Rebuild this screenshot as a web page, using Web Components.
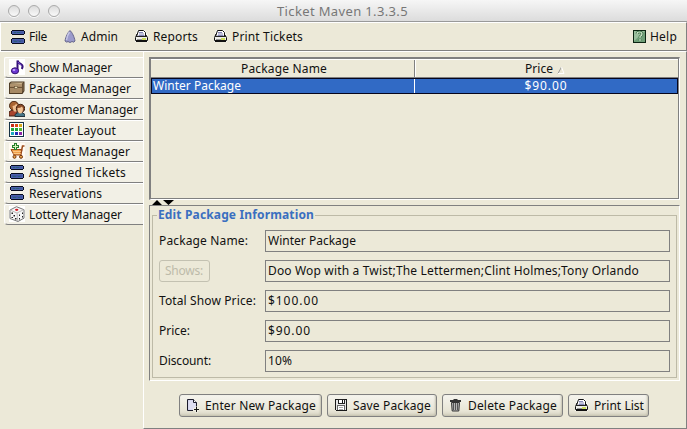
<!DOCTYPE html>
<html lang="en"><head><meta charset="utf-8"><title>Ticket Maven 1.3.3.5</title>
<style>
html,body{margin:0;height:100%;overflow:hidden;background:#ece9d8}
body{font:12px/16px "Noto Sans","Open Sans",sans-serif;color:#111}
</style></head><body>
<ticket-app></ticket-app>
<script>
const define=(name,css,html,after)=>customElements.define(name,class extends HTMLElement{
  connectedCallback(){
    if(!this.shadowRoot){
      const root=this.attachShadow({mode:'open'});
      root.innerHTML='<style>*{box-sizing:border-box}'+css+'</style>'+(typeof html==='function'?html(this):html);
    }
    if(after)after(this);
  }
});

/* 16x16 icon artwork */
const cabinet='<g shape-rendering="crispEdges"><path d="M2 1h12v1h1v3h-1v1H2V5H1V2h1zM2 9h12v1h1v4h-1v1H2v-1H1v-4h1z" fill="#080c20"/><path d="M2 2h12v3H2zM2 10h12v4H2z" fill="#4d62ac"/><path d="M3 3h10v1H3zM3 11h10v2H3z" fill="#4055a0"/><path d="M4 3h2v1H4zM7 3h3v1H7zM4 12h3v1H4zM9 12h2v1H9z" fill="#28607a"/></g>';
const printer='<path d="M3 1h8l3 5v7H1V8z" fill="#fff" opacity=".7"/><path d="M4.500 1.500h5l2 2v4h-9z" fill="#fff" stroke="#111"/><path d="M5 3.500h4M5 5h5M4.500 6.500h6" stroke="#8486b5"/><path d="M3 5L1.500 8.500v3h12v-3L12 6" fill="none" stroke="#111"/><path d="M2 8h11v3H2z" fill="#efefea"/><path d="M2 7.500h11" stroke="#222"/><path d="M3 10.500h5" stroke="#999"/><path d="M8 10h4" stroke="#c0d82c" stroke-width="1.500"/><path d="M2 12.500h11" stroke="#111"/>';
const art={
cabinet,printer,
admin:'<path d="M8 1.500C6 3 3.600 8 3 12q2 2 3 .5 2 2 4 0 2 1.500 3-.5C12.400 8 10 3 8 1.500z" fill="#9b9bcb" stroke="#66668a"/><path d="M7.500 3C6 5 5 8 4.500 11" stroke="#c6c6e6" stroke-width="1.500" fill="none"/>',
help:'<rect x="1.500" y="1.500" width="12" height="12" fill="#6f9f78" stroke="#0c2412"/><path d="M2 2h11L2 12z" fill="#9bc09e"/><path d="M5 5q0-2 2.500-2T10 5q0 1.500-2 2.500V9M8 10v2" fill="none" stroke="#396c42" stroke-width="2.500"/><path d="M5 5q0-2 2.500-2T10 5q0 1.500-2 2.500V9M8 10v2" fill="none" stroke="#d5ead0" stroke-width="1.200"/>',
note:'<rect width="16" height="16" fill="#fff"/><path d="M8.500 11V1.500q.5 2.500 4 4 2 1.500.3 4.500" fill="none" stroke="#351179" stroke-width="2"/><ellipse cx="6" cy="11.800" rx="3.600" ry="3" fill="#6b37d1" stroke="#33106e"/><ellipse cx="5" cy="11" rx="1.400" ry="1" fill="#c9a9ff"/><path d="M9 3q1 2 3.500 3.300" stroke="#7b55d8" fill="none"/>',
pack:'<path d="M0 3l2-1.500h13.500V11l-2 3H0z" fill="#4e3b25"/><path d="M1 4h12v9H1z" fill="#a68965"/><path d="M1 3.500l1.500-1H14.500l-2 1.500z" fill="#d2bb94"/><path d="M13.500 4l1.200-1v7.500L13.500 12z" fill="#80674a"/><path d="M1 7.500h12" stroke="#6d5235"/><path d="M1 5h12" stroke="#b79b76"/><rect x="5.500" y="6.500" width="3" height="2" fill="#eee0b4" stroke="#59462e" stroke-width=".5"/>',
people:'<path d="M0 15v-4l3-2 5 1v5z" fill="#a8442d" stroke="#3f2014"/><circle cx="5" cy="4.800" r="4.500" fill="#a96431" stroke="#4d2c18"/><path d="M3.500 5q2.500 0 3.500-2l2 1v5q-2 3-4.500 1z" fill="#f0bf90"/><path d="M6 15.500v-2l3-2h4l3 2v2z" fill="#467586" stroke="#24333b"/><circle cx="11.500" cy="7.500" r="4.200" fill="#8a4b27" stroke="#402313"/><path d="M8.500 7q3 0 4.500-1.500l1 2q-.2 5-2.700 5T8.500 8z" fill="#f3c596"/>',
grid:'<g shape-rendering="crispEdges"><rect width="16" height="16" fill="#fff"/><path d="M0 0h15v15H0z" fill="#143044"/><path d="M1 1h13v13H1z" fill="#fff"/><path d="M2 2h3v3H2z" fill="#c92b19"/><path d="M6 2h3v3H6z" fill="#dc4a15"/><path d="M10 2h3v3h-3z" fill="#d5a719"/><path d="M2 6h3v3H2zM6 6h3v3H6z" fill="#20a53a"/><path d="M10 6h3v3h-3z" fill="#53b635"/><path d="M2 10h3v3H2z" fill="#1daac0"/><path d="M6 10h3v3H6z" fill="#2430b9"/><path d="M10 10h3v3h-3z" fill="#8b26a4"/></g>',
cart:'<rect width="16" height="16" fill="#fffaf2"/><path d="M2 6.500h11L12 12H5z" fill="#f0a04a" stroke="#9c4c1c"/><path d="M15.500 3h-2L12 10" fill="none" stroke="#9c4c1c" stroke-width="1.500"/><path d="M4 8.500h8M4.500 10.500h7" stroke="#ffd092" stroke-width=".8"/><circle cx="5.500" cy="13.800" r="1.500" fill="#f0ad4a" stroke="#70320f"/><circle cx="12" cy="13.800" r="1.500" fill="#f0ad4a" stroke="#70320f"/><path d="M5 0h3v2h2v3H8v2H5V5H3V2h2z" fill="#257e2b"/><path d="M6.500 1v5M4 3.500h5" stroke="#d9f4bd"/>',
die:'<rect width="16" height="16" fill="#fff"/><path d="M7.500.7l7.500 3v8.500L9 15.500 1 12.500V4z" fill="#f6f6f6" stroke="#777"/><path d="M1 4l7 3 6.500-3.300M8 7l.7 8" fill="none" stroke="#bbb"/><ellipse cx="7.700" cy="3.800" rx="1.700" ry="1.100" fill="#d31820"/><path d="M2.500 6.500h1.500v1.500H2.500zM4.500 9h1.500v1.500H4.500zM2.500 11h1.500v1H2.500zM6 12h1.500v1.500H6zM10 8.500h1v1.500h-1zM13 6.500h1V8h-1zM10 12h1v1.500h-1zM13 10h1v1.500h-1z" fill="#222"/>',
add:'<path d="M2.500 1.500h6l3 3v8h-9z" fill="#cdceea" stroke="#1b1b2c"/><path d="M3 4h6M3 6h8M3 8h8M3 10h7M5 2v10M7 2v10M9 4v8" stroke="#f0f0fa" stroke-width=".6"/><path d="M8.500 1.500v3h3" fill="#fff" stroke="#1b1b2c"/><path d="M8 11.500h6M11.500 8.500v6" stroke="#f0eee4" stroke-width="3"/><path d="M9 11.500h5M11.500 9v5" stroke="#111"/>',
save:'<g shape-rendering="crispEdges"><path d="M2 1h12v12H3l-1-1z" fill="#191919"/><path d="M3 2h10v10H3z" fill="#e6e6e6"/><path d="M5 1h7v5H5z" fill="#222"/><path d="M6 2h5v3H6z" fill="#fff"/><path d="M9 2h1v3H9z" fill="#111"/><path d="M4 7h8v5H4z" fill="#666"/><path d="M5 8h6v4H5z" fill="#fff"/><path d="M6 9h4v1H6zM6 11h4v1H6z" fill="#aaa"/></g>',
trash:'<path d="M5.500 1.500h4" stroke="#333"/><path d="M2 3h11" stroke="#333" stroke-width="2"/><path d="M3.500 4.500h8l-.7 8.500h-6.600z" fill="#b5b5b5" stroke="#333"/><path d="M5.500 5v7M7.500 5v7M9.500 5v7" stroke="#555"/>'
};
define('app-icon',':host{display:block;width:16px;height:16px;flex:none}svg{display:block}',
 h=>'<svg width="16" height="16" viewBox="0 0 16 16">'+art[h.getAttribute('name')]+'</svg>');

/* Label tracked to the width given in its w attribute */
define('fit-text',':host{display:block;flex:none;white-space:pre;height:16px}span{display:inline-block}','<span><slot></slot></span>',h=>{
  const s=h.shadowRoot.querySelector('span'),w=+h.getAttribute('w'),n=h.textContent.length;
  if(w){s.style.letterSpacing=((w-s.getBoundingClientRect().width)/n)+'px';h.style.width=w+'px';}
});
define('title-bar',`:host{display:flex;align-items:center;height:22px;padding:0 0 0 8px;border-bottom:1px solid #999;background:linear-gradient(#f6f6f6,#dcdcdc);color:#777;font-size:13px}
 i{width:12px;height:12px;margin-right:8px;border:1px solid #aaa;border-radius:50%;background:linear-gradient(#dcdcdc,#fafafa);box-shadow:0 1px #f8f8f8}div{margin-left:209px}`,
 '<i></i><i></i><i></i><div><slot></slot></div>');
define('menu-item',':host{display:flex;align-items:center;gap:var(--gap,3px);height:16px}','<slot></slot>');
define('menu-bar',`:host{display:flex;height:30px;padding:6px 10px 0 9px;border-top:1px solid #fff;border-left:1px solid #fff;border-right:1px solid #808080;border-bottom:1px solid #fff;box-shadow:inset 0 -1px #808080}.sp{flex:1}`,`
 <menu-item style="margin-right:15px"><app-icon name="cabinet"></app-icon><fit-text w="18">File</fit-text></menu-item>
 <menu-item style="margin-right:16px"><app-icon name="admin"></app-icon><fit-text w="37">Admin</fit-text></menu-item>
 <menu-item style="margin-right:15px"><app-icon name="printer"></app-icon><fit-text w="45">Reports</fit-text></menu-item>
 <menu-item><app-icon name="printer"></app-icon><fit-text w="71">Print Tickets</fit-text></menu-item>
 <span class="sp"></span><menu-item style="--gap:2px;margin-right:-1px"><app-icon name="help"></app-icon><fit-text w="27">Help</fit-text></menu-item>`);
define('side-tab',`:host{display:flex;gap:4px;height:21px;padding:2px 0 0 4px;border-top:1px solid #fff;border-left:1px solid #fff;border-bottom:1px solid #808080;border-radius:2px 0 0 4px;background:#f2f0e6}app-icon{margin-top:-1px}`,
 h=>`<app-icon name="${h.getAttribute('icon')}"></app-icon><slot></slot>`);
define('side-tabs',':host{display:block;width:143px;padding:5px 0 0 4px}',()=>[['note','Show Manager',83],['pack','Package Manager',102],['people','Customer Manager',109],['grid','Theater Layout',87],['cart','Request Manager',101],['cabinet','Assigned Tickets',97],['cabinet','Reservations',73],['die','Lottery Manager',93]].map(a=>`<side-tab icon="${a[0]}"><fit-text w="${a[2]}">${a[1]}</fit-text></side-tab>`).join(''));
define('package-table',`:host{display:block;height:143px;width:531px;border:1px solid #fff;border-top:2px solid #808080;border-left:2px solid #808080;box-shadow:inset -1px -1px #808080;padding-right:1px}
 .r{display:grid;grid-template-columns:264px 1fr}.h{height:19px;border-bottom:1px solid #808080;border-top:1px solid #fff}
 .h>div:first-child{border-right:1px solid #808080;box-shadow:1px 0 #fff;padding-left:3px}.h>div{display:flex;justify-content:center;gap:4px;padding-top:1px}.h>div:last-child{padding-right:3px}
 .d{height:16px;background:#316ac5;border:1px solid #05051c;color:#fff;grid-template-columns:263px 1fr}.d>div:first-child{border-right:1px solid #fff;padding-left:1px}.d>div{display:flex;height:14px}.d fit-text{margin-top:-1px}.d .p{justify-content:center}svg{margin-top:5px}`,`
 <div class="r h"><div><fit-text w="86">Package Name</fit-text></div><div><fit-text w="28">Price</fit-text><svg width="8" height="8"><path d="M1 7.500L4.500 1" stroke="#999" fill="none"/><path d="M4.500 1L7 7.500H1" stroke="#fff" fill="none"/></svg></div></div>
 <div class="r d"><div><fit-text w="88">Winter Package</fit-text></div><div class="p"><fit-text w="43">$90.00</fit-text></div></div>`);
define('split-bar',':host{display:block;height:5px;padding-left:3px}svg{display:block}','<svg width="24" height="5"><path d="M0 5L5 0l5 5zM11 0h11l-5.500 5z" fill="#000"/></svg>');
define('form-row',':host{display:flex;height:22px;margin-bottom:8px;padding:0 6px}.l{width:106px;padding-top:3px}.f{flex:1;border:1px solid #808080;padding:2px 0 0 2px}.off{width:51px;height:22px;border:1px solid #c3c1b1;border-radius:3px;color:#bdbbaa;padding:2px 0 0 5px}',
 h=>`<div class="l" style="${h.hasAttribute('off')?'padding:0':''}">${h.hasAttribute('off')?'<div class="off"><slot name="label"></slot></div>':'<slot name="label"></slot>'}</div><div class="f"><slot></slot></div>`);
define('package-form',`:host{display:block;width:531px;height:176px;border:1px solid #fff;border-top-color:#808080;border-left-color:#808080;padding:1px 2px 2px 2px}
 fieldset{margin:0;height:100%;border:1px solid #bdbaa7;padding:7px 0 0 0;min-width:0}legend{margin:0 0 0 4px;padding:0 1px;height:16px;color:#3a6fc0;font-weight:bold}`,
 ()=>'<fieldset><legend><fit-text w="156">Edit Package Information</fit-text></legend>'+[['Package Name:',89,'Winter Package',88],['Shows:',38,'Doo Wop with a Twist;The Lettermen;Clint Holmes;Tony Orlando',371],['Total Show Price:',97,'$100.00',51],['Price:',31,'$90.00',43],['Discount:',52,'10%',24]].map((a,i)=>`<form-row ${i==1?'off':''}><fit-text slot="label" w="${a[1]}">${a[0]}</fit-text><fit-text w="${a[3]}">${a[2]}</fit-text></form-row>`).join('')+'</fieldset>');
define('action-button',':host{display:flex;gap:4px;height:23px;padding:3px 0 0 5px;border:1px solid #808080;border-radius:3px;background:linear-gradient(#f5f4ee,#e8e5d6 75%,#d5d2c1);box-shadow:inset -1px -1px 2px #c4c1b0}',h=>`<app-icon name="${h.getAttribute('icon')}"></app-icon><slot></slot>`);
define('action-bar',':host{display:grid;grid-template-columns:143px 110px 121px 81px;column-gap:5px;padding:13px 0 0 30px}',`
 <action-button icon="add"><fit-text w="111">Enter New Package</fit-text></action-button><action-button icon="save"><fit-text w="78">Save Package</fit-text></action-button><action-button icon="trash"><fit-text w="89">Delete Package</fit-text></action-button><action-button icon="printer"><fit-text w="50">Print List</fit-text></action-button>`);
define('ticket-app',':host{display:flex;flex-direction:column;width:687px;height:429px;background:#ece9d8}.b{display:flex;flex:1;min-height:0}main{flex:1;min-width:0;border:solid;border-width:0 1px 1px;border-color:#808080 #808080 #808080 #fff;padding:5px 0 0 5px}',
 '<title-bar><fit-text w="131">Ticket Maven 1.3.3.5</fit-text></title-bar><menu-bar></menu-bar><div class="b"><side-tabs></side-tabs><main><package-table></package-table><split-bar></split-bar><package-form></package-form><action-bar></action-bar></main></div>');
</script></body></html>
